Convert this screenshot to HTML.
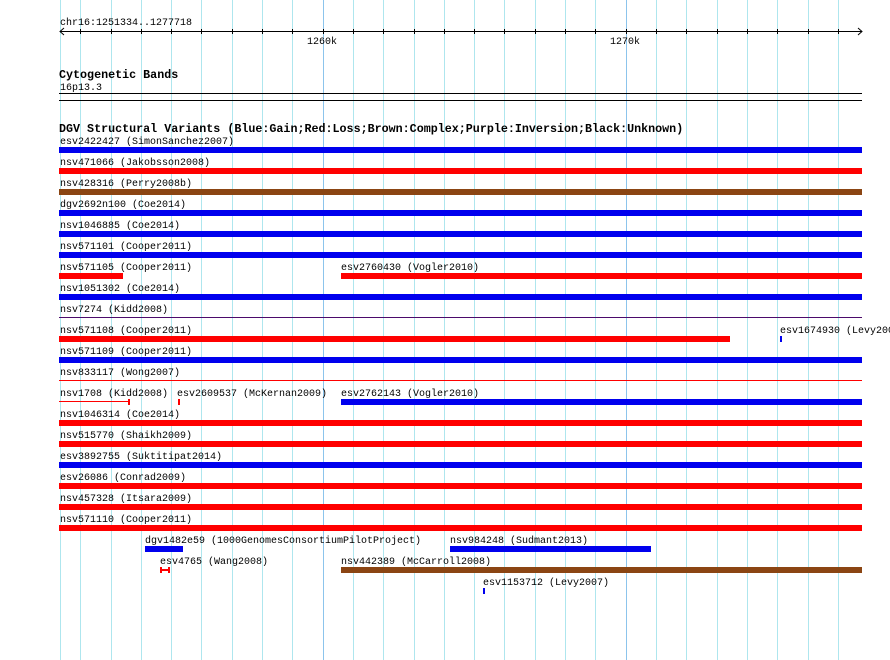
<!DOCTYPE html>
<html><head><meta charset="utf-8"><style>
html,body{margin:0;padding:0;background:#fff;width:890px;height:660px;overflow:hidden}
svg text{font-family:"Liberation Mono",monospace;font-size:10px;fill:#000}
svg text.b{font-weight:bold;font-size:11.7px}
</style></head><body>
<svg width="890" height="660" xmlns="http://www.w3.org/2000/svg">
<g stroke="#aee6ee" stroke-width="1">
<line x1="60.5" y1="0" x2="60.5" y2="660"/>
<line x1="80.5" y1="0" x2="80.5" y2="660"/>
<line x1="111.5" y1="0" x2="111.5" y2="660"/>
<line x1="141.5" y1="0" x2="141.5" y2="660"/>
<line x1="171.5" y1="0" x2="171.5" y2="660"/>
<line x1="201.5" y1="0" x2="201.5" y2="660"/>
<line x1="232.5" y1="0" x2="232.5" y2="660"/>
<line x1="262.5" y1="0" x2="262.5" y2="660"/>
<line x1="292.5" y1="0" x2="292.5" y2="660"/>
<line x1="353.5" y1="0" x2="353.5" y2="660"/>
<line x1="383.5" y1="0" x2="383.5" y2="660"/>
<line x1="414.5" y1="0" x2="414.5" y2="660"/>
<line x1="444.5" y1="0" x2="444.5" y2="660"/>
<line x1="474.5" y1="0" x2="474.5" y2="660"/>
<line x1="504.5" y1="0" x2="504.5" y2="660"/>
<line x1="535.5" y1="0" x2="535.5" y2="660"/>
<line x1="565.5" y1="0" x2="565.5" y2="660"/>
<line x1="595.5" y1="0" x2="595.5" y2="660"/>
<line x1="656.5" y1="0" x2="656.5" y2="660"/>
<line x1="686.5" y1="0" x2="686.5" y2="660"/>
<line x1="717.5" y1="0" x2="717.5" y2="660"/>
<line x1="747.5" y1="0" x2="747.5" y2="660"/>
<line x1="777.5" y1="0" x2="777.5" y2="660"/>
<line x1="808.5" y1="0" x2="808.5" y2="660"/>
<line x1="838.5" y1="0" x2="838.5" y2="660"/>
</g>
<g stroke="#8cc4ec"><line x1="323.5" y1="0" x2="323.5" y2="660"/><line x1="626.5" y1="0" x2="626.5" y2="660"/></g>
<!-- ruler -->
<g stroke="#000" stroke-width="1" fill="none">
<line x1="60" y1="31.5" x2="862" y2="31.5"/>
<polyline points="64,28 60,31.5 64,35"/>
<polyline points="858,28 862,31.5 858,35"/>
<path d="M80.5 29v5M111.5 29v5M141.5 29v5M171.5 29v5M201.5 29v5M232.5 29v5M262.5 29v5M292.5 29v5M323.5 29v5M353.5 29v5M383.5 29v5M414.5 29v5M444.5 29v5M474.5 29v5M504.5 29v5M535.5 29v5M565.5 29v5M595.5 29v5M626.5 29v5M656.5 29v5M686.5 29v5M717.5 29v5M747.5 29v5M777.5 29v5M808.5 29v5M838.5 29v5"/>
<line x1="59" y1="93.5" x2="862" y2="93.5"/>
<line x1="59" y1="100.5" x2="862" y2="100.5"/>
</g>
<text x="60" y="25">chr16:1251334..1277718</text>
<text x="307" y="44">1260k</text>
<text x="610" y="44">1270k</text>
<text class="b" x="59" y="78">Cytogenetic Bands</text>
<text x="60" y="90">16p13.3</text>
<text class="b" x="59" y="132">DGV Structural Variants (Blue:Gain;Red:Loss;Brown:Complex;Purple:Inversion;Black:Unknown)</text>
<!-- bars -->
<g>
<rect x="59" y="147" width="803" height="6" fill="#0000ee"/>
<rect x="59" y="168" width="803" height="6" fill="#ff0000"/>
<rect x="59" y="189" width="803" height="6" fill="#8b4513"/>
<rect x="59" y="210" width="803" height="6" fill="#0000ee"/>
<rect x="59" y="231" width="803" height="6" fill="#0000ee"/>
<rect x="59" y="252" width="803" height="6" fill="#0000ee"/>
<rect x="59" y="273" width="64" height="6" fill="#ff0000"/>
<rect x="341" y="273" width="521" height="6" fill="#ff0000"/>
<rect x="59" y="294" width="803" height="6" fill="#0000ee"/>
<rect x="59" y="317" width="803" height="1" fill="#4b0a6b"/>
<rect x="59" y="336" width="671" height="6" fill="#ff0000"/>
<rect x="780" y="336" width="2" height="6" fill="#0000ee"/>
<rect x="59" y="357" width="803" height="6" fill="#0000ee"/>
<rect x="59" y="380" width="803" height="1" fill="#ff0000"/>
<rect x="59" y="401" width="70" height="1" fill="#ff0000"/>
<rect x="128" y="399" width="2" height="6" fill="#ff0000"/>
<rect x="178" y="399" width="2" height="6" fill="#ff0000"/>
<rect x="341" y="399" width="521" height="6" fill="#0000ee"/>
<rect x="59" y="420" width="803" height="6" fill="#ff0000"/>
<rect x="59" y="441" width="803" height="6" fill="#ff0000"/>
<rect x="59" y="462" width="803" height="6" fill="#0000ee"/>
<rect x="59" y="483" width="803" height="6" fill="#ff0000"/>
<rect x="59" y="504" width="803" height="6" fill="#ff0000"/>
<rect x="59" y="525" width="803" height="6" fill="#ff0000"/>
<rect x="145" y="546" width="38" height="6" fill="#0000ee"/>
<rect x="450" y="546" width="201" height="6" fill="#0000ee"/>
<rect x="160" y="567" width="2" height="6" fill="#ff0000"/>
<rect x="168" y="567" width="2" height="6" fill="#ff0000"/>
<rect x="160" y="569" width="10" height="2" fill="#ff0000"/>
<rect x="341" y="567" width="521" height="6" fill="#8b4513"/>
<rect x="483" y="588" width="2" height="6" fill="#0000ee"/>
</g>
<g>
<text x="60" y="144">esv2422427 (SimonSanchez2007)</text>
<text x="60" y="165">nsv471066 (Jakobsson2008)</text>
<text x="60" y="186">nsv428316 (Perry2008b)</text>
<text x="60" y="207">dgv2692n100 (Coe2014)</text>
<text x="60" y="228">nsv1046885 (Coe2014)</text>
<text x="60" y="249">nsv571101 (Cooper2011)</text>
<text x="60" y="270">nsv571105 (Cooper2011)</text>
<text x="341" y="270">esv2760430 (Vogler2010)</text>
<text x="60" y="291">nsv1051302 (Coe2014)</text>
<text x="60" y="312">nsv7274 (Kidd2008)</text>
<text x="60" y="333">nsv571108 (Cooper2011)</text>
<text x="780" y="333">esv1674930 (Levy2007)</text>
<text x="60" y="354">nsv571109 (Cooper2011)</text>
<text x="60" y="375">nsv833117 (Wong2007)</text>
<text x="60" y="396">nsv1708 (Kidd2008)</text>
<text x="177" y="396">esv2609537 (McKernan2009)</text>
<text x="341" y="396">esv2762143 (Vogler2010)</text>
<text x="60" y="417">nsv1046314 (Coe2014)</text>
<text x="60" y="438">nsv515770 (Shaikh2009)</text>
<text x="60" y="459">esv3892755 (Suktitipat2014)</text>
<text x="60" y="480">esv26086 (Conrad2009)</text>
<text x="60" y="501">nsv457328 (Itsara2009)</text>
<text x="60" y="522">nsv571110 (Cooper2011)</text>
<text x="145" y="543">dgv1482e59 (1000GenomesConsortiumPilotProject)</text>
<text x="450" y="543">nsv984248 (Sudmant2013)</text>
<text x="160" y="564">esv4765 (Wang2008)</text>
<text x="341" y="564">nsv442389 (McCarroll2008)</text>
<text x="483" y="585">esv1153712 (Levy2007)</text>
</g>
</svg>
</body></html>
